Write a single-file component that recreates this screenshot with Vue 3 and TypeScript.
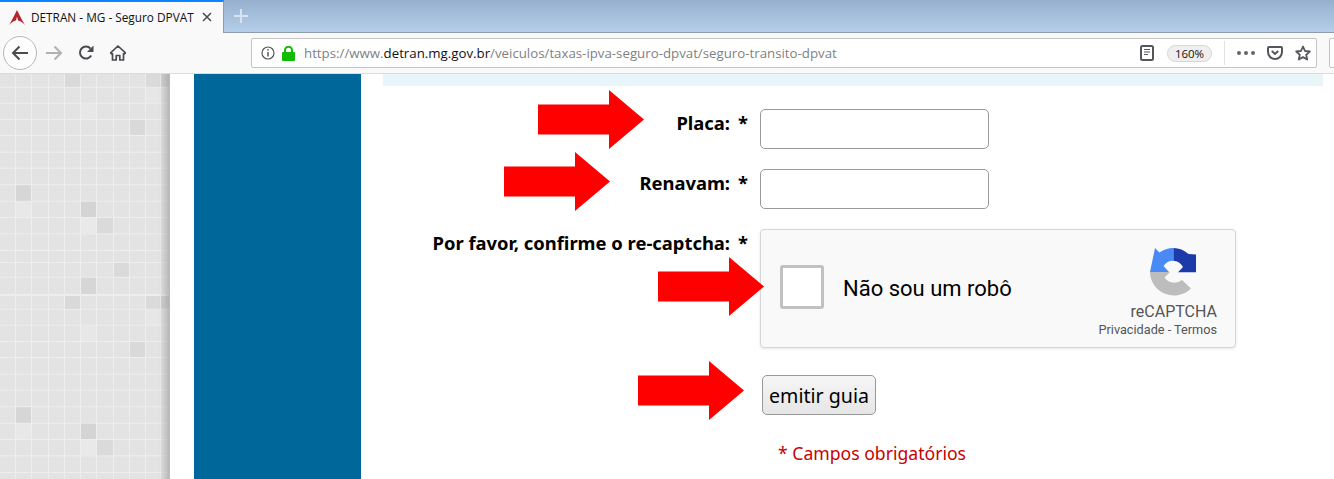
<script setup lang="ts">
const lines = [12.7, 28.7, 45, 61, 77.7, 93.7, 110.3, 126.7, 143, 159.3, 176, 188, 202.7, 220]
const cols = [0, 16, 32, 49, 65, 81, 97, 114, 130, 146, 161]
const rowTop = (r: number) => (r === 0 ? -1 : lines[r - 1]) + 1
const periods = [0, 222]
const specials = [
  { c: 4, r: 0, f: '#d9d9d9' },
  { c: 9, r: 0, f: '#dadada' },
  { c: 10, r: 0, f: '#d2d2d2' },
  { c: 9, r: 1, f: '#e7e7e7' },
  { c: 5, r: 2, f: '#e7e7e7' },
  { c: 8, r: 3, f: '#d9d9d9' },
  { c: 1, r: 7, f: '#d6d6d6' },
  { c: 1, r: 8, f: '#e8e8e8' },
  { c: 5, r: 8, f: '#d4d4d4' },
  { c: 5, r: 9, f: '#e9e9e9' },
  { c: 6, r: 9, f: '#dadada' },
  { c: 7, r: 12, f: '#dadada' },
  { c: 5, r: 13, f: '#d6d6d6' },
]
const colWidth = (c: number) => (cols[c + 1] ?? 170) - cols[c] - 1
const arrows = [
  { x: 538, y: 90 },
  { x: 504, y: 152 },
  { x: 658, y: 257 },
  { x: 638, y: 361 },
]
</script>

<template>
  <div class="screen">
    <header class="chrome">
      <div class="tabstrip">
        <div class="tab">
          <svg class="favicon" width="16" height="15" viewBox="0 0 16 15">
            <path d="M8 0 L11 6 C12.500 9 14 12 16 15 C13.500 12.500 11.500 11 9 10.500 L8 6.500 L7 10.500 C4.500 11 2.500 12.500 0 15 C2 12 3.500 9 5 6 Z" fill="#b3252c" />
          </svg>
          <span class="tab-title">DETRAN - MG - Seguro DPVAT</span>
          <svg class="tab-close" width="10" height="10" viewBox="0 0 10 10">
            <path d="M1 1 L9 9 M9 1 L1 9" stroke="#4a4a4f" stroke-width="1.500" />
          </svg>
        </div>
        <svg class="new-tab" width="14" height="14" viewBox="0 0 14 14">
          <path d="M7 0 V14 M0 7 H14" stroke="#d7e3f0" stroke-width="2" />
        </svg>
      </div>
      <div class="toolbar">
        <div class="back">
          <svg width="18" height="16" viewBox="0 0 18 16">
            <path d="M17 8 H2 M8.500 1.500 L2 8 L8.500 14.500" fill="none" stroke="#4a4a4f" stroke-width="2" />
          </svg>
        </div>
        <svg class="tool-forward" width="18" height="16" viewBox="0 0 18 16">
          <path d="M1 8 H16 M9.500 1.500 L16 8 L9.500 14.500" fill="none" stroke="#b1b1b3" stroke-width="2" />
        </svg>
        <svg class="tool-reload" width="16" height="16" viewBox="0 0 16 16">
          <path d="M13.200 10.500 A6 6 0 1 1 12.500 3.600" fill="none" stroke="#4a4a4f" stroke-width="2" />
          <path d="M15.500 0.500 V7 H9 Z" fill="#4a4a4f" />
        </svg>
        <svg class="tool-home" width="16" height="16" viewBox="0 0 16 16">
          <path d="M8 1 L15.500 8 L14 9 L13.500 8.700 V15 H9.800 V10.500 H6.200 V15 H2.500 V8.700 L2 9 L0.500 8 Z" fill="none" stroke="#4a4a4f" stroke-width="1.700" stroke-linejoin="round" />
        </svg>
        <div class="urlbar">
          <svg class="info" width="14" height="14" viewBox="0 0 14 14">
            <circle cx="7" cy="7" r="6" fill="none" stroke="#55555a" stroke-width="1.200" />
            <path d="M7 6 V10.500" stroke="#55555a" stroke-width="1.500" />
            <circle cx="7" cy="3.800" r="0.900" fill="#55555a" />
          </svg>
          <svg class="lock" width="13" height="15" viewBox="0 0 13 15">
            <path d="M3 6 V4.200 A3.500 3.500 0 0 1 10 4.200 V6" fill="none" stroke="#12bc00" stroke-width="2" />
            <rect y="6" width="13" height="9" rx="1" fill="#12bc00" />
          </svg>
          <span class="url"><span class="url-dim">https://www.</span><span class="url-host">detran.mg.gov.br</span><span class="url-dim">/veiculos/taxas-ipva-seguro-dpvat/seguro-transito-dpvat</span></span>
          <svg class="reader" width="14" height="16" viewBox="0 0 14 16">
            <rect x="1" y="1" width="12" height="14" rx="1.500" fill="none" stroke="#55555a" stroke-width="2" />
            <path d="M4 4.500 H10 M4 7 H10 M4 9.500 H8" stroke="#55555a" stroke-width="1" />
          </svg>
          <span class="zoom-pill">160%</span>
          <span class="url-sep"></span>
          <span class="dots"><i></i><i></i><i></i></span>
          <svg class="pocket" width="16" height="14" viewBox="0 0 16 14">
            <path d="M2 1 H14 A1 1 0 0 1 15 2 V6 A7 7 0 0 1 1 6 V2 A1 1 0 0 1 2 1 Z" fill="none" stroke="#55555a" stroke-width="2" />
            <path d="M4.800 5 L8 8 L11.200 5" fill="none" stroke="#55555a" stroke-width="2" />
          </svg>
          <svg class="star" width="16" height="16" viewBox="0 0 16 16">
            <path d="M8 1.500 L10 6 L14.800 6.500 L11.200 9.800 L12.200 14.500 L8 12.100 L3.800 14.500 L4.800 9.800 L1.200 6.500 L6 6 Z" fill="none" stroke="#55555a" stroke-width="1.800" stroke-linejoin="round" />
          </svg>
        </div>
        <div class="stub"></div>
      </div>
    </header>

    <main class="page">
      <div class="tiles">
        <svg width="170" height="405" viewBox="0 0 170 405">
          <rect width="170" height="405" fill="#eeeeee" />
          <g v-for="p in periods" :key="p">
            <template v-for="(_, r) in lines" :key="r">
              <rect
                v-for="(cx, c) in cols"
                :key="c"
                :x="cx"
                :y="rowTop(r) + p"
                :width="colWidth(c)"
                :height="lines[r] - rowTop(r)"
                fill="#e3e3e3"
              />
            </template>
            <rect
              v-for="s in specials"
              :key="`${s.c}-${s.r}`"
              :x="cols[s.c]"
              :y="rowTop(s.r) + p"
              :width="colWidth(s.c)"
              :height="lines[s.r] - rowTop(s.r)"
              :fill="s.f"
            />
          </g>
          <defs>
            <linearGradient id="edge" x1="0" x2="1" y1="0" y2="0">
              <stop offset="0" stop-color="#a0a0a0" stop-opacity="0" />
              <stop offset="1" stop-color="#a0a0a0" stop-opacity="0.7" />
            </linearGradient>
          </defs>
          <rect x="159" width="11" height="405" fill="url(#edge)" />
        </svg>
      </div>
      <div class="sidebar"></div>
      <section class="content">
        <div class="band"></div>
        <form class="form" @submit.prevent>
          <label class="label"><span>Placa:</span><span>*</span></label>
          <input class="field" type="text" />
          <label class="label"><span>Renavam:</span><span>*</span></label>
          <input class="field" type="text" />
          <label class="label"><span>Por favor, confirme o re-captcha:</span><span>*</span></label>
          <div class="captcha">
            <span class="check"></span>
            <span class="captcha-text">Não sou um robô</span>
            <div class="brand">
              <svg class="logo" width="46" height="48" viewBox="0 0 46 48">
                <path d="M23.300 0 A24 24 0 0 1 38.500 6 L46 6.500 V24.300 H28 L33 19 A12 12 0 0 0 23.300 12.700 Z" fill="#1c3aa9" />
                <path d="M23.300 0 A24 24 0 0 0 9.500 4.500 L5 0 L0 24 H19 L13.500 18 A11.500 11.500 0 0 1 23.300 12.700 Z" fill="#4a8af4" />
                <path d="M0 24 H20 L14.500 29.500 A12 12 0 0 0 32 32 L41 40.500 A24 24 0 0 1 0 24 Z" fill="#bdbdbd" />
              </svg>
              <span class="brand-name">reCAPTCHA</span>
              <span class="brand-links">Privacidade - Termos</span>
            </div>
          </div>
          <button class="submit" type="button">emitir guia</button>
          <p class="note">* Campos obrigatórios</p>
        </form>
      </section>
      <svg
        v-for="a in arrows"
        :key="a.x"
        class="arrow"
        :style="{ left: a.x + 'px', top: a.y - 74 + 'px' }"
        width="106"
        height="59"
        viewBox="0 0 106 59"
      >
        <polygon points="0,14.500 71,14.500 71,0 106,29.500 71,59 71,44.500 0,44.500" fill="#ff0000" />
      </svg>
    </main>
  </div>
</template>

<style>
html, body { margin: 0; background: #fff; overflow: hidden; }
</style>

<style scoped>
.screen { width: 1334px; height: 479px; overflow: hidden; font-family: "Noto Sans", sans-serif; }
.chrome { height: 74px; display: flex; flex-direction: column; font-family: "Open Sans", "Noto Sans", sans-serif; }
.tabstrip { height: 33px; box-sizing: border-box; display: flex; align-items: center; background: linear-gradient(#95afcd, #b5cfea); border-bottom: 1px solid #8e9cac; }
.tab { width: 224px; height: 33px; box-sizing: border-box; border-top: 2px solid #0a84ff; border-right: 1px solid #8e9cac; background: #f9f9fa; display: flex; align-items: center; padding: 0 11px 0 9px; gap: 6px; color: #111; flex: none; }
.favicon { flex: none; }
.tab-title { font-size: 11.800px; white-space: nowrap; flex: 1; }
.tab-close { flex: none; }
.new-tab { margin-left: 10px; }
.toolbar { height: 41px; box-sizing: border-box; background: #f9f9fa; border-bottom: 1px solid #dcdcdc; display: flex; align-items: center; padding-left: 3px; }
.back { width: 32px; height: 32px; border: 1px solid #b8b8b8; border-radius: 50%; background: #fdfdfd; display: flex; align-items: center; justify-content: center; flex: none; }
.tool-forward { margin-left: 8px; flex: none; }
.tool-reload { margin-left: 15px; flex: none; }
.tool-home { margin-left: 16px; flex: none; }
.urlbar { margin-left: 125px; width: 1066px; height: 30px; box-sizing: border-box; background: #fff; border: 1px solid #c4c4c4; border-radius: 2px; display: flex; align-items: center; flex: none; padding-left: 9px; }
.info { flex: none; }
.lock { margin-left: 7px; flex: none; }
.url { margin-left: 9px; font-size: 13.280px; white-space: nowrap; flex: 1; }
.url-dim { color: #7f7f84; }
.url-host { color: #111; }
.reader { flex: none; margin-right: 13px; }
.zoom-pill { width: 45px; height: 17px; box-sizing: border-box; border: 1px solid #d6d6d6; background: #efefef; border-radius: 9px; font-size: 11.500px; line-height: 15px; text-align: center; color: #111; flex: none; }
.url-sep { width: 1px; height: 24px; background: #e2e2e2; margin: 0 12px; flex: none; }
.dots { display: flex; gap: 3px; flex: none; margin-right: 12px; }
.dots i { width: 4px; height: 4px; border-radius: 50%; background: #66666a; }
.pocket { flex: none; margin-right: 12px; }
.star { flex: none; margin-right: 5px; }
.stub { margin-left: 12px; width: 20px; height: 30px; box-sizing: border-box; background: #fff; border: 1px solid #c4c4c4; border-radius: 2px; flex: none; }
.page { position: relative; height: 405px; display: flex; background: #fff; overflow: hidden; }
.tiles { width: 170px; height: 405px; flex: none; }
.tiles svg { display: block; }
.sidebar { width: 167px; height: 405px; margin-left: 24px; background: #00679b; flex: none; }
.content { width: 940px; margin-left: 22px; flex: none; }
.band { height: 12px; background: #e9f5f8; }
.form { display: grid; grid-template-columns: 365px 1fr; column-gap: 12px; margin: 23px 0 0; align-items: start; }
.label { grid-column: 1; display: flex; justify-content: flex-end; gap: 8px; font-size: 18.400px; font-weight: 700; line-height: 28px; color: #000; }
.field { grid-column: 2; width: 229px; height: 40px; box-sizing: border-box; border: 1px solid #999; border-radius: 5px; background: #fff; margin: 0 0 20px; padding: 0; }
.captcha { grid-column: 2; width: 476px; height: 119px; box-sizing: border-box; border: 1px solid #d6d6d6; border-radius: 4px; background: #f9f9f9; box-shadow: 0 1px 3px rgba(0,0,0,.1); display: flex; align-items: center; padding-left: 19px; font-family: Roboto, sans-serif; }
.check { width: 44px; height: 44px; box-sizing: border-box; border: 3px solid #c1c1c1; border-radius: 3px; background: #fff; flex: none; margin-bottom: 4px; }
.captcha-text { margin-left: 19px; font-size: 22px; color: #000; flex: 1; }
.brand { display: flex; flex-direction: column; align-items: flex-end; width: 120px; margin-right: 18px; margin-top: 9px; }
.logo { display: block; margin-right: 21px; }
.brand-name { font-size: 16px; line-height: 19px; color: #555; margin-top: 6px; }
.brand-links { font-size: 12.700px; line-height: 16px; color: #555; margin-top: 1px; white-space: nowrap; }
.submit { grid-column: 2; justify-self: start; margin: 27px 0 0 2px; width: 114px; height: 40px; box-sizing: border-box; border: 1px solid #999; border-radius: 5px; background: linear-gradient(#f6f6f6, #e6e6e6); font-family: "Noto Sans", sans-serif; font-size: 19.600px; color: #000; padding: 0; }
.note { grid-column: 2; margin: 27px 0 0 18px; font-size: 17.600px; line-height: 22px; color: #c80000; white-space: nowrap; }
.arrow { position: absolute; }
</style>
